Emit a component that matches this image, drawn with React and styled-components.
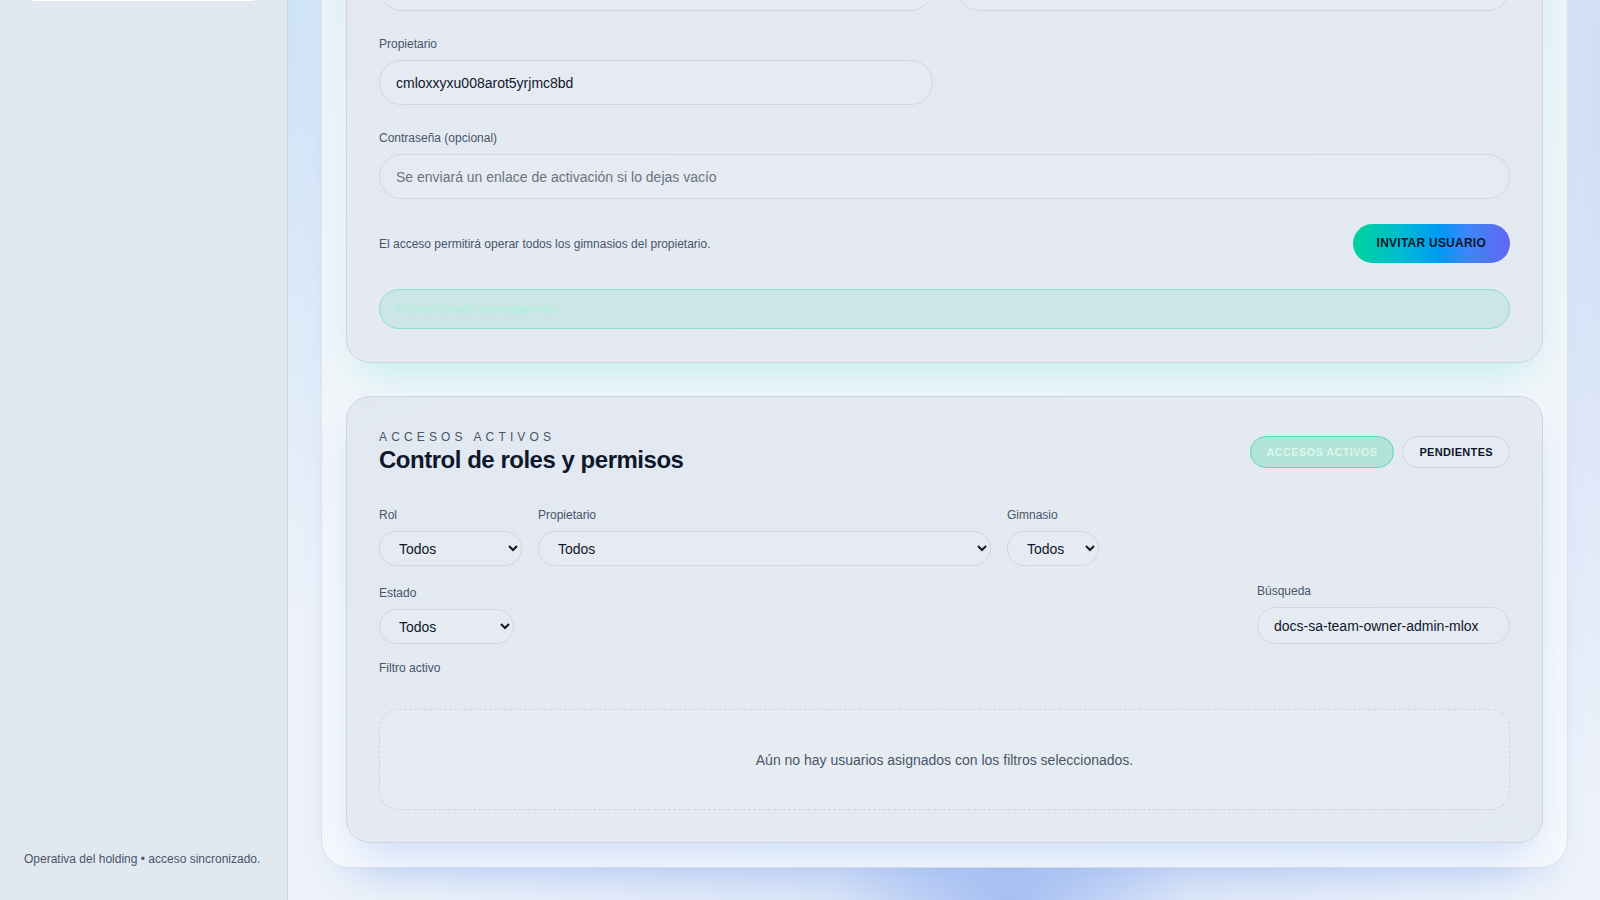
import React from 'react';
import styled, { createGlobalStyle } from 'styled-components';

const GlobalStyle = createGlobalStyle`
  html, body {
    margin: 0;
    padding: 0;
    height: 100%;
  }
  body {
    font-family: "Liberation Sans", Arial, sans-serif;
    background: #eef3fa;
    color: #0f172a;
  }
  * {
    box-sizing: border-box;
  }
`;

const Shell = styled.div`
  display: flex;
  height: 100vh;
  overflow: hidden;
`;

const Sidebar = styled.aside`
  width: 288px;
  flex-shrink: 0;
  display: flex;
  flex-direction: column;
  padding: 24px 24px 33px;
  background: #e2e8f0;
  border-right: 1px solid #cbd3de;
  overflow: hidden;
`;

const SideNav = styled.nav`
  display: flex;
  flex-direction: column;
  gap: 6px;
  margin-top: -${p => p.$offset}px;
`;

const Brand = styled.div`
  display: flex;
  align-items: center;
  gap: 12px;
  height: 48px;
  margin-bottom: 18px;
  font-weight: 700;
  font-size: 16px;
`;

const NavItem = styled.div`
  height: 40px;
  display: flex;
  align-items: center;
  padding: 0 16px;
  border-radius: 12px;
  font-size: 14px;
  color: #334155;
  background: ${p => (p.$active ? '#ffffff' : 'transparent')};
`;

const SideFooter = styled.p`
  margin: auto 0 0;
  font-size: 12px;
  line-height: 16px;
  color: #475569;
`;

const Main = styled.main`
  flex: 1;
  overflow: hidden;
  padding: 32px 32px 33px 33px;
  background:
    radial-gradient(ellipse 14% 8% at 55% 100%, rgba(150, 180, 242, 0.7), transparent 100%),
    radial-gradient(ellipse 42% 20% at 52% 100%, rgba(200, 216, 246, 0.6), transparent 100%),
    radial-gradient(ellipse 7% 70% at 0% 0%, rgba(200, 224, 247, 0.85), transparent 100%),
    radial-gradient(ellipse 6% 80% at 100% 10%, rgba(200, 216, 246, 0.8), transparent 100%),
    #eef3fa;
`;

const Scroller = styled.div`
  margin-top: -${p => p.$offset}px;
`;

const Panel = styled.section`
  display: flex;
  flex-direction: column;
  gap: 33px;
  padding: 24px;
  border-radius: 28px;
  border: 1px solid #dbe2ec;
  background: linear-gradient(180deg, rgba(236, 243, 247, 0.92) 0%, rgba(246, 249, 253, 0.96) 100%);
  box-shadow: 0 26px 50px -34px rgba(80, 130, 235, 0.5);
`;

const Card = styled.div`
  display: flex;
  flex-direction: column;
  padding: 32px 32px ${p => p.$bottom || 32}px;
  border-radius: 24px;
  border: 1px solid #cdd5e0;
  background: linear-gradient(160deg, #e2e8f1 0%, #e5eaf2 60%, #e3e9f1 100%);
  box-shadow: 0 20px 40px -14px ${p => p.$glow};
`;

const CardHeader = styled.div`
  display: flex;
  align-items: center;
  justify-content: space-between;
`;

const Eyebrow = styled.div`
  font-size: 12px;
  line-height: 16px;
  letter-spacing: 0.345em;
  text-transform: uppercase;
  color: #475569;
`;

const Title = styled.h2`
  margin: 0;
  font-size: 24px;
  line-height: 30px;
  font-weight: 700;
  letter-spacing: -0.02em;
  color: #0f172a;
`;

const FormGrid = styled.div`
  display: grid;
  grid-template-columns: 1fr 1fr;
  column-gap: 24px;
  row-gap: 25px;
  margin-top: 32px;
`;

const Field = styled.label`
  display: flex;
  flex-direction: column;
  grid-column: ${p => (p.$wide ? '1 / -1' : 'auto')};
  width: ${p => (p.$width ? `${p.$width}px` : 'auto')};
`;

const Label = styled.span`
  font-size: 12px;
  line-height: 16px;
  color: #475569;
  margin-bottom: 8px;
`;

const TextInput = styled.input`
  height: ${p => p.$h || 45}px;
  padding: 0 16px;
  border-radius: 999px;
  border: 1px solid #d0d7e1;
  background: #e6ebf3;
  font-family: inherit;
  font-size: 14px;
  color: #0f172a;
  outline: none;
  &::placeholder {
    color: #6b7280;
  }
`;

const Select = styled.select`
  height: ${p => p.$h || 35}px;
  width: 100%;
  padding: 0 8px 0 15px;
  border-radius: 999px;
  border: 1px solid #d0d7e1;
  background: #e6ebf3;
  font-family: inherit;
  font-size: 14px;
  color: #0f172a;
  outline: none;
`;

const ActionRow = styled.div`
  display: flex;
  align-items: center;
  justify-content: space-between;
  margin-top: 25px;
`;

const Hint = styled.p`
  margin: 0;
  font-size: 12px;
  line-height: 16px;
  color: #475569;
`;

const PrimaryButton = styled.button`
  padding: 12px 24px;
  border: none;
  border-radius: 999px;
  background: linear-gradient(90deg, #00d39a 0%, #00bcd0 30%, #0099f7 55%, #3b87f8 72%, #6366f1 100%);
  font-family: inherit;
  font-size: 12px;
  line-height: 15px;
  font-weight: 700;
  letter-spacing: 0.02em;
  color: #0f172a;
  text-transform: uppercase;
`;

const Alert = styled.div`
  margin-top: 26px;
  padding: 10px 16px;
  border-radius: 20px;
  border: 1px solid #8fe0c8;
  background: #cce5e6;
  font-size: 12px;
  line-height: 18px;
  color: #a9f2d2;
`;

const Tabs = styled.div`
  display: flex;
  gap: 8px;
`;

const Tab = styled.button`
  padding: 8px 16px;
  border-radius: 999px;
  border: 1px solid ${p => (p.$active ? '#5cd9b2' : '#cfd6e0')};
  background: ${p => (p.$active ? '#b3e2d8' : 'rgba(255, 255, 255, 0.08)')};
  font-family: inherit;
  font-size: 11px;
  line-height: 14px;
  font-weight: 700;
  letter-spacing: 0.03em;
  text-transform: uppercase;
  color: ${p => (p.$active ? '#d8f8ea' : '#0f172a')};
`;

const FilterRow = styled.div`
  display: flex;
  align-items: flex-end;
  justify-content: ${p => (p.$spread ? 'space-between' : 'flex-start')};
  gap: 16px;
  margin-top: ${p => p.$top}px;
`;

const FilterNote = styled.div`
  margin-top: 16px;
  font-size: 12px;
  line-height: 16px;
  color: #475569;
`;

const EmptyState = styled.div`
  margin-top: 33px;
  height: 101px;
  display: flex;
  align-items: center;
  justify-content: center;
  border-radius: 20px;
  border: 1px dashed #cbd3de;
  background: rgba(236, 240, 247, 0.35);
  font-size: 14px;
  color: #475569;
`;

const LogoMark = styled.div`
  width: 36px;
  height: 36px;
  border-radius: 12px;
  background: linear-gradient(135deg, #00d39a, #6366f1);
`;

export default function App() {
  return (
    <>
      <GlobalStyle />
      <Shell>
        <Sidebar>
          <SideNav $offset={319}>
            <Brand>
              <LogoMark />
              Holding Fitness
            </Brand>
            <NavItem>Resumen</NavItem>
            <NavItem>Gimnasios</NavItem>
            <NavItem>Propietarios</NavItem>
            <NavItem>Facturación</NavItem>
            <NavItem $active>Accesos</NavItem>
          </SideNav>
          <SideFooter>Operativa del holding • acceso sincronizado.</SideFooter>
        </Sidebar>

        <Main>
          <Scroller $offset={226}>
            <Panel>
              <Card $glow="rgba(45, 212, 191, 0.28)" $bottom={33}>
                <div>
                  <Eyebrow>Nuevo acceso</Eyebrow>
                  <Title>Invitar usuario</Title>
                </div>
                <FormGrid>
                  <Field>
                    <Label>Correo electrónico</Label>
                    <TextInput defaultValue="" />
                  </Field>
                  <Field>
                    <Label>Rol</Label>
                    <TextInput defaultValue="" />
                  </Field>
                  <Field>
                    <Label>Propietario</Label>
                    <TextInput defaultValue="cmloxxyxu008arot5yrjmc8bd" />
                  </Field>
                  <div />
                  <Field $wide>
                    <Label>Contraseña (opcional)</Label>
                    <TextInput placeholder="Se enviará un enlace de activación si lo dejas vacío" />
                  </Field>
                </FormGrid>
                <ActionRow>
                  <Hint>El acceso permitirá operar todos los gimnasios del propietario.</Hint>
                  <PrimaryButton>Invitar usuario</PrimaryButton>
                </ActionRow>
                <Alert>Acceso creado correctamente.</Alert>
              </Card>

              <Card $glow="rgba(80, 135, 240, 0.3)">
                <CardHeader>
                  <div>
                    <Eyebrow>Accesos activos</Eyebrow>
                    <Title>Control de roles y permisos</Title>
                  </div>
                  <Tabs>
                    <Tab $active>Accesos activos</Tab>
                    <Tab>Pendientes</Tab>
                  </Tabs>
                </CardHeader>

                <FilterRow $top={32}>
                  <Field $width={143}>
                    <Label>Rol</Label>
                    <Select defaultValue="all">
                      <option value="all">Todos</option>
                    </Select>
                  </Field>
                  <Field $width={453}>
                    <Label>Propietario</Label>
                    <Select defaultValue="all">
                      <option value="all">Todos</option>
                    </Select>
                  </Field>
                  <Field $width={92}>
                    <Label>Gimnasio</Label>
                    <Select defaultValue="all">
                      <option value="all">Todos</option>
                    </Select>
                  </Field>
                </FilterRow>

                <FilterRow $top={17} $spread>
                  <Field $width={135}>
                    <Label>Estado</Label>
                    <Select defaultValue="all">
                      <option value="all">Todos</option>
                    </Select>
                  </Field>
                  <Field $width={253}>
                    <Label>Búsqueda</Label>
                    <TextInput $h={37} defaultValue="docs-sa-team-owner-admin-mlox" />
                  </Field>
                </FilterRow>

                <FilterNote>Filtro activo</FilterNote>
                <EmptyState>Aún no hay usuarios asignados con los filtros seleccionados.</EmptyState>
              </Card>
            </Panel>
          </Scroller>
        </Main>
      </Shell>
    </>
  );
}
